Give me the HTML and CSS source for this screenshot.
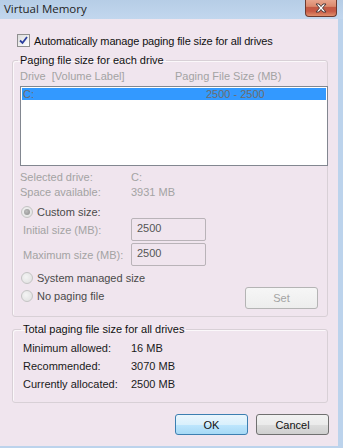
FILE: index.html
```html
<!DOCTYPE html>
<html lang="en">
<head>
  <meta charset="UTF-8">
  <title>Virtual Memory</title>
  <link rel="stylesheet" href="styles.css">
</head>
<body>
  <div class="window">
    <div class="titlebar">
      <span class="title">Virtual Memory</span>
      <div class="close-btn">
        <svg width="16" height="10" viewBox="0 0 16 10">
          <path d="M3 1 L6 1 L8 3.5 L10 1 L13 1 L9.5 5 L13 9 L10 9 L8 6.5 L6 9 L3 9 L6.5 5 Z" fill="#fff" stroke="#4a3a3a" stroke-width="1" stroke-linejoin="round"/>
        </svg>
      </div>
    </div>

    <div class="client">
      <label class="auto-row">
        <span class="checkbox">
          <svg width="9" height="9" viewBox="0 0 9 9">
            <path d="M1 4.5 L3.5 7 L8 1" fill="none" stroke="#2c3f9e" stroke-width="1.8"/>
          </svg>
        </span>
        Automatically manage paging file size for all drives
      </label>

      <fieldset class="group drives">
        <legend>Paging file size for each drive</legend>
        <div class="list-head disabled">
          <span class="col-drive">Drive&nbsp; [Volume Label]</span>
          <span class="col-size">Paging File Size (MB)</span>
        </div>
        <div class="listbox">
          <div class="list-row selected">
            <span class="col-drive">C:</span>
            <span class="col-size">2500 - 2500</span>
          </div>
        </div>

        <div class="info disabled">
          <div class="info-row"><span class="info-label">Selected drive:</span><span>C:</span></div>
          <div class="info-row"><span class="info-label">Space available:</span><span>3931 MB</span></div>
        </div>

        <div class="radio-row custom">
          <span class="radio checked"></span>
          <span>Custom size:</span>
        </div>
        <div class="size-row">
          <span class="size-label disabled">Initial size (MB):</span>
          <span class="textbox">2500</span>
        </div>
        <div class="size-row">
          <span class="size-label disabled">Maximum size (MB):</span>
          <span class="textbox">2500</span>
        </div>

        <div class="bottom-rows">
          <div class="radio-col">
            <div class="radio-row"><span class="radio"></span><span>System managed size</span></div>
            <div class="radio-row"><span class="radio"></span><span>No paging file</span></div>
          </div>
          <button class="btn set-btn">Set</button>
        </div>
      </fieldset>

      <fieldset class="group totals">
        <legend>Total paging file size for all drives</legend>
        <div class="total-row"><span class="total-label">Minimum allowed:</span><span>16 MB</span></div>
        <div class="total-row"><span class="total-label">Recommended:</span><span>3070 MB</span></div>
        <div class="total-row"><span class="total-label">Currently allocated:</span><span>2500 MB</span></div>
      </fieldset>

      <div class="actions">
        <button class="btn ok-btn">OK</button>
        <button class="btn cancel-btn">Cancel</button>
      </div>
    </div>
  </div>
</body>
</html>
```

FILE: styles.css
```css
* {
  box-sizing: border-box;
}

body {
  margin: 0;
  width: 343px;
  height: 448px;
  overflow: hidden;
  font-family: "Liberation Sans", Arial, sans-serif;
  font-size: 11px;
  color: #1a1a1a;
}

.window {
  width: 343px;
  height: 448px;
  background: #bcd3ec;
  display: flex;
  flex-direction: column;
}

.titlebar {
  height: 19px;
  flex: none;
  display: flex;
  align-items: flex-start;
  justify-content: space-between;
  background: linear-gradient(to bottom, #b6cde6, #c2d7ee);
  padding-left: 4px;
  padding-right: 6px;
}

.title {
  font-family: "Open Sans", "Liberation Sans", sans-serif;
  font-size: 11.5px;
  line-height: 18px;
  color: #1e1e1e;
}

.close-btn {
  width: 32px;
  height: 17px;
  border: 1px solid #6d3a2f;
  border-top: none;
  border-radius: 0 0 4px 4px;
  background: linear-gradient(to bottom, #e8a58d 0%, #db8a6e 40%, #c35a44 45%, #c75a45 70%, #e18f6c 100%);
  display: flex;
  align-items: center;
  justify-content: center;
}

.client {
  width: 338px;
  height: 427px;
  flex: none;
  background: #f0e5ee;
  padding-top: 15px;
}

.auto-row {
  display: flex;
  align-items: center;
  gap: 4px;
  margin-left: 17px;
  height: 13px;
  color: #111;
  letter-spacing: -0.15px;
}

.checkbox {
  width: 13px;
  height: 13px;
  border: 1px solid #8f8f8f;
  background: linear-gradient(135deg, #dcdcdc, #ffffff);
  display: flex;
  align-items: center;
  justify-content: center;
}

.group {
  margin: 0 0 0 12px;
  width: 316px;
  border: 1px solid #d8d0d6;
  border-radius: 3px;
  box-shadow: inset 1px 1px #fbf8fa;
  padding: 0 0 0 7px;
  min-inline-size: 0;
}

.group legend {
  padding: 0 2px;
  margin-left: -2px;
  color: #111;
  line-height: 13px;
}

.drives {
  margin-top: 7px;
  height: 263px;
}

.disabled {
  color: #a3a3a3;
}

.list-head {
  display: flex;
  height: 13px;
  margin-top: 3px;
}

.col-drive {
  width: 155px;
}

.listbox {
  width: 308px;
  height: 80px;
  margin-top: 3px;
  border: 1px solid #828790;
  background: #fff;
  padding: 1px 1px 0;
}

.list-row {
  display: flex;
  height: 12px;
  line-height: 12px;
  color: #6d6d6d;
  padding-left: 1px;
}

.list-row.selected {
  background: #3399ff;
}

.list-row .col-drive {
  width: 183px;
}

.info {
  margin-top: 4px;
}

.info-row {
  display: flex;
  height: 15px;
  line-height: 15px;
}

.info-label {
  width: 111px;
}

.radio-row {
  display: flex;
  align-items: center;
  gap: 4px;
  height: 18px;
  color: #4a4a4a;
  padding-left: 1px;
}

.radio-row.custom {
  margin-top: 6px;
  height: 12px;
}

.radio {
  width: 12px;
  height: 12px;
  border-radius: 50%;
  border: 1px solid #c4c4c4;
  background: radial-gradient(circle at 40% 40%, #f4f4f4, #dedede);
  display: flex;
  align-items: center;
  justify-content: center;
}

.radio.checked::after {
  content: "";
  width: 6px;
  height: 6px;
  border-radius: 50%;
  background: radial-gradient(circle at 40% 40%, #bdbdbd, #8c8c8c);
}

.size-row {
  display: flex;
  align-items: center;
  height: 23px;
  margin-bottom: 2px;
}

.size-label {
  width: 111px;
  padding-left: 3px;
}

.textbox {
  width: 75px;
  height: 23px;
  border: 1px solid #b9b3b8;
  border-radius: 2px;
  padding: 1px 5px;
  color: #555;
  line-height: 17px;
}

.bottom-rows {
  display: flex;
  justify-content: space-between;
  align-items: flex-start;
  margin-top: 3px;
  width: 298px;
}

.btn {
  font-family: "Liberation Sans", Arial, sans-serif;
  font-size: 11px;
  border-radius: 3px;
  padding: 0;
}

.set-btn {
  width: 73px;
  height: 22px;
  margin-top: 18px;
  border: 1px solid #b4b4b4;
  background: linear-gradient(to bottom, #f6f6f6, #ededed);
  color: #a3a3a3;
}

.totals {
  margin-top: 6px;
  height: 80px;
  padding-left: 10px;
}

.total-row {
  display: flex;
  height: 18px;
  line-height: 18px;
  color: #1a1a1a;
}

.total-row:first-of-type {
  margin-top: 3px;
}

.total-label {
  width: 108px;
}

.actions {
  display: flex;
  gap: 8px;
  margin-top: 11px;
  margin-left: 175px;
}

.ok-btn {
  width: 73px;
  height: 21px;
  border: 1px solid #3c7fb1;
  background: linear-gradient(to bottom, #eaf6fd 0%, #d9f0fc 50%, #bee6fd 51%, #a7d9f5 100%);
  color: #111;
}

.cancel-btn {
  width: 73px;
  height: 21px;
  border: 1px solid #707070;
  background: linear-gradient(to bottom, #f2f2f2 0%, #ebebeb 50%, #dddddd 51%, #cfcfcf 100%);
  color: #111;
}
```
